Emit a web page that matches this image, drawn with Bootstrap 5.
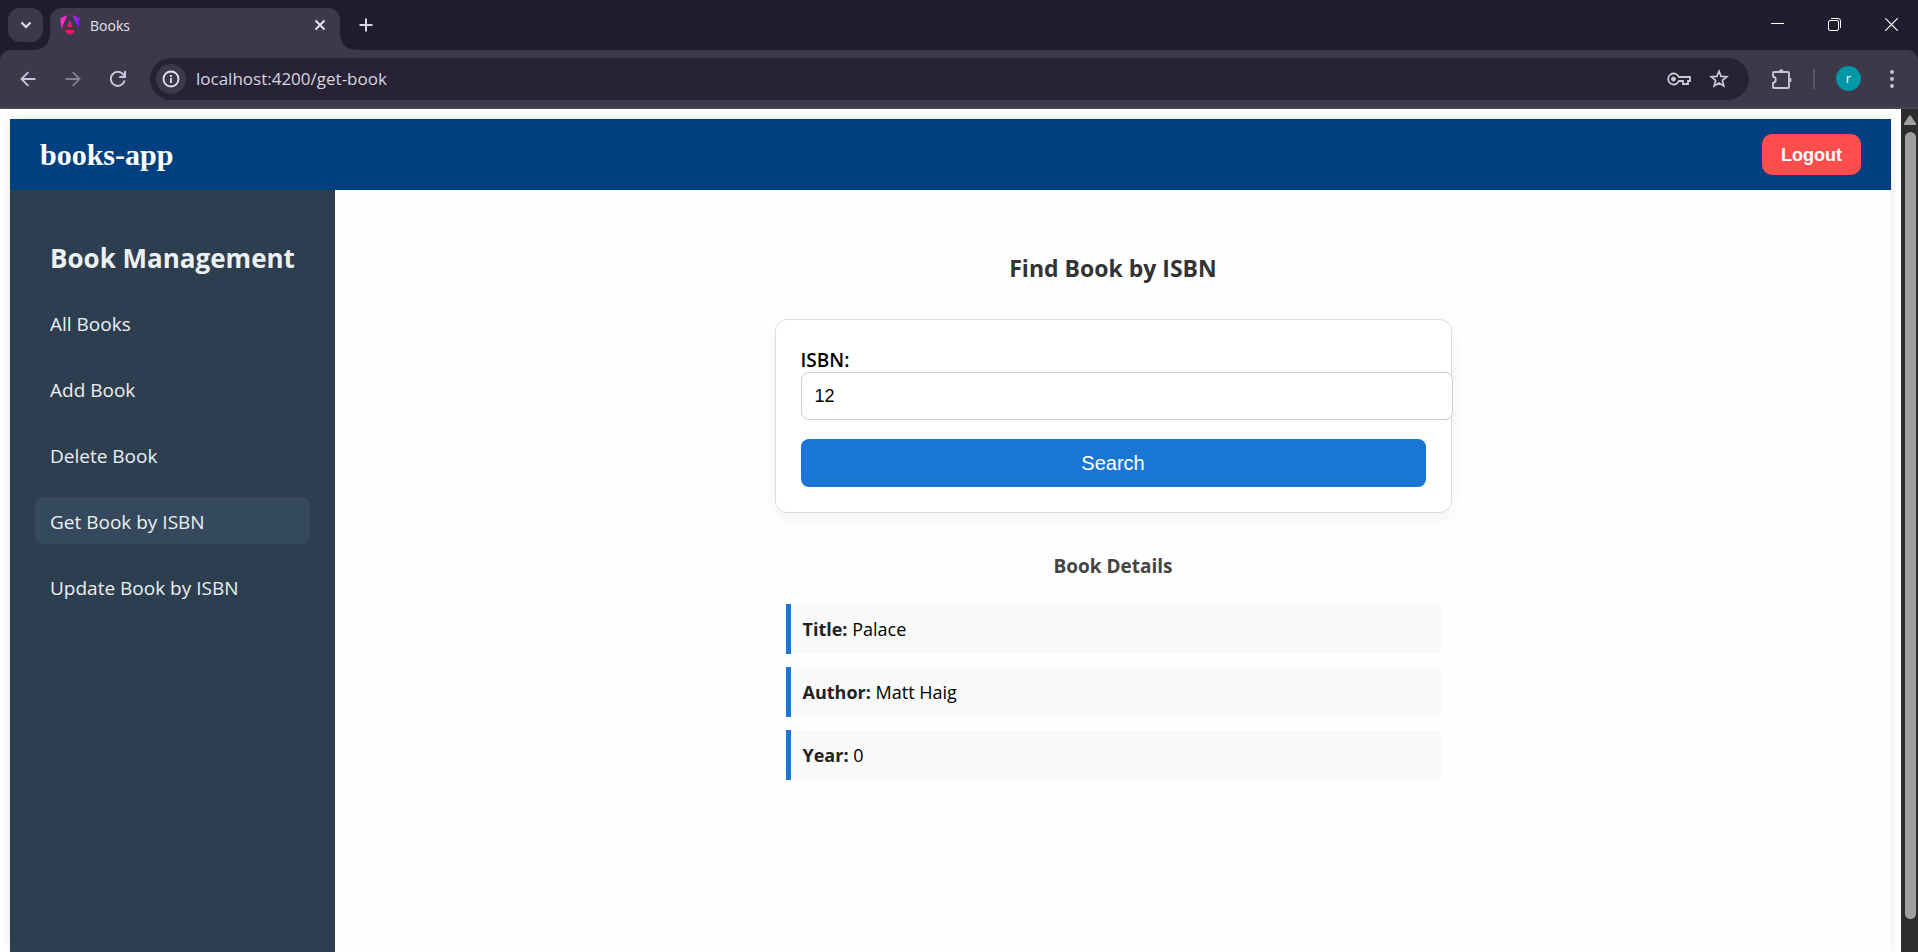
<!DOCTYPE html>
<html lang="en">
<head>
<meta charset="utf-8">
<meta name="viewport" content="width=device-width, initial-scale=1">
<title>Books</title>
<link href="https://cdn.jsdelivr.net/npm/bootstrap@5.3.0/dist/css/bootstrap.min.css" rel="stylesheet">
<style>
:root { --strip: #211d2f; --bar: #3d394b; --omni: #272335; --icon: #c9c4dc; }
body { font-family: "Open Sans", "Noto Sans", sans-serif; background: #fff; color: #000; }
button { border: 0; background: none; padding: 0; color: inherit; }
svg { display: block; flex: none; }

/* browser frame */
.tab-strip { background: var(--strip); height: 50px; padding-left: 8px; }
.tab-menu { width: 35px; height: 34px; margin-top: 8px; border-radius: 12px; background: var(--bar); color: #e6e2f2; }
.browser-tab { position: relative; width: 290px; height: 42px; margin: 8px 0 0 7px; padding: 0 10px 8px; border-radius: 12px 12px 0 0; background: var(--bar); color: #e6e3ee; font-size: 14px; }
.browser-tab::before, .browser-tab::after { content: ""; position: absolute; bottom: 0; width: 14px; height: 14px; }
.browser-tab::before { right: 100%; background: radial-gradient(circle at 0 0, transparent 13px, var(--bar) 14px); }
.browser-tab::after { left: 100%; background: radial-gradient(circle at 100% 0, transparent 13px, var(--bar) 14px); }
.tab-title { margin-left: 10px; }
.new-tab { width: 52px; height: 50px; color: #d9d4e8; }
.win-controls { margin-right: -2px; }
.win-btn { width: 57px; height: 48px; color: #fff; }
.frame-bg { background: var(--strip); }
.tool-bar { height: 59px; background: var(--bar); border-bottom: 2px solid #4a4654; border-radius: 10px 10px 0 0; color: var(--icon); padding: 0 4px 0 5px; }
.tool-btn { width: 45px; height: 40px; }
.omnibox { height: 42px; border-radius: 21px; background: var(--omni); margin-left: 10px; padding: 0 10px 0 6px; }
.site-info { width: 30px; height: 30px; border-radius: 50%; background: var(--bar); color: #e6e2f2; }
.url-field { border: 0; outline: 0; background: none; color: #d8d5e0; font-size: 17px; padding: 0; margin-left: 10px; }
.omni-btn { width: 40px; height: 40px; color: #cbc8d2; }
.tool-rule { width: 2px; height: 20px; background: #5a5568; margin-left: 11px; }
.avatar-dot { width: 25px; height: 25px; border-radius: 50%; background: #0097a7; color: #fff; font-size: 13px; line-height: 23px; margin-left: 21px; }

/* scrollbar */
.scroll-track { width: 17px; background: #2c2c2c; padding: 6px 0 0 1px; }
.scroll-thumb { width: 11px; height: 94%; margin-top: 7px; border-radius: 6px; background: #9f9f9f; }

/* page */
.page-area { padding: 10px 10px 0; }
.app-box { box-shadow: 0 0 10px rgba(0,0,0,.1); }
.app-header { height: 71px; background: #004080; padding: 0 30px; }
.brand-name { font-family: "Liberation Serif", serif; font-weight: 700; font-size: 30px; line-height: 34px; color: #fff; }
.btn-logout { height: 41px; padding: 0 19px; border-radius: 10px; background: #ff4d4d; color: #fff; font: 700 18px/38px "Liberation Sans", sans-serif; }
.side-menu { width: 325px; background: #2c3e50; padding: 48px 25px 0; color: #ecf0f1; }
.side-menu h2 { font-size: 26px; line-height: 40px; font-weight: 700; padding-left: 15px; margin: 0 0 21px; white-space: nowrap; }
.side-menu nav { gap: 19px; }
.side-menu a { color: #ecf0f1; font-size: 19px; line-height: 27px; padding: 12px 15px 8px; border-radius: 8px; text-decoration: none; white-space: nowrap; }
.side-menu a.active { background: #34495e; }
.main-pane { background: #fefefe; padding-top: 60px; }
.main-pane h2 { font-size: 23px; line-height: 36px; font-weight: 700; color: #333; margin: 0 0 33px; }
.search-card { width: 100%; max-width: 677px; padding: 25px; border: 1px solid #ddd; border-radius: 12px; background: #fff; box-shadow: 0 5px 15px rgba(0,0,0,.05); }
.search-card label { font-size: 19px; line-height: 23px; padding-top: 4px; font-weight: 600; }
.isbn-input { width: calc(100% + 27px); height: 48px; padding: 0 13px; border: 1px solid #ccc; border-radius: 8px; background: #fff; color: #000; font: 18px "Liberation Sans", sans-serif; }
.btn-search { height: 48px; margin-top: 19px; border-radius: 8px; background: #1976d2; color: #fff; font: 20px/46px "Liberation Sans", sans-serif; }
.main-pane h3 { font-size: 19px; line-height: 30px; font-weight: 700; color: #444; margin: 38px 0 23px; }
.detail-list { width: 100%; max-width: 655px; gap: 13px; }
.detail-list li { height: 50px; padding: 0 12px; line-height: 51px; font-size: 18px; border-left: 5px solid #1976d2; background: #f9f9f9; }
.detail-list strong { color: #222; }
</style>
</head>
<body>
<div class="d-flex flex-column vh-100 overflow-hidden">
  <header class="frame-bg">
    <div class="tab-strip d-flex align-items-start">
      <button class="tab-menu d-flex align-items-center justify-content-center" aria-label="Search tabs">
        <svg width="12" height="8" viewBox="0 0 12 8" fill="none" stroke="currentColor" stroke-width="2"><path d="M1.5 1.5 6 6l4.500-4.500"/></svg>
      </button>
      <div class="browser-tab d-flex align-items-center">
        <svg width="20" height="20" viewBox="0 0 20 20">
          <defs>
            <linearGradient id="ga" x1="0" y1="0" x2="0" y2="1"><stop offset="0" stop-color="#ff1fb8"/><stop offset="1" stop-color="#ff1060"/></linearGradient>
            <linearGradient id="gb" x1="0" y1="0" x2="1" y2="1"><stop offset="0" stop-color="#b02cf0"/><stop offset="1" stop-color="#6a10ff"/></linearGradient>
          </defs>
          <path d="M7.500 0 .3 3.200 1.300 14z" fill="#f92bc8"/>
          <path d="M12.500 0l7.200 3.200-1 10.800z" fill="url(#gb)"/>
          <path d="M10 5.500 12.600 12H7.400z" fill="url(#ga)"/>
          <path d="M6 15h8l.8 1.800L10 19.800l-4.800-3z" fill="#ff1060"/>
        </svg>
        <span class="tab-title flex-grow-1">Books</span>
        <button aria-label="Close tab" class="me-1"><svg width="12" height="12" viewBox="0 0 12 12" stroke="currentColor" stroke-width="2"><path d="M1.500 1.500l9 9M10.500 1.500l-9 9"/></svg></button>
      </div>
      <button class="new-tab d-flex align-items-center justify-content-center" aria-label="New tab"><svg width="14" height="14" viewBox="0 0 14 14" stroke="currentColor" stroke-width="2"><path d="M7 .5v13M.5 7h13"/></svg></button>
      <div class="win-controls d-flex ms-auto">
        <button class="win-btn d-flex align-items-center justify-content-center" aria-label="Minimize"><svg width="13" height="13" viewBox="0 0 13 13" stroke="currentColor"><path d="M0 5.500h13"/></svg></button>
        <button class="win-btn d-flex align-items-center justify-content-center" aria-label="Restore"><svg width="13" height="13" viewBox="0 0 13 13" fill="none" stroke="currentColor"><rect x=".5" y="2.500" width="10" height="10" rx="1.500"/><path d="M3 .5h7a2.500 2.500 0 0 1 2.500 2.500v7"/></svg></button>
        <button class="win-btn d-flex align-items-center justify-content-center" aria-label="Close"><svg width="13" height="13" viewBox="0 0 13 13" stroke="currentColor" stroke-width="1.200"><path d="M.3.3l12.400 12.400M12.700.3.3 12.700"/></svg></button>
      </div>
    </div>
    <div class="tool-bar d-flex align-items-center">
      <button class="tool-btn d-flex align-items-center justify-content-center" aria-label="Back"><svg width="16" height="16" viewBox="0 0 16 16" fill="none" stroke="currentColor" stroke-width="1.900"><path d="M15.500 8H2M8.300 1.200 1.500 8l6.800 6.800"/></svg></button>
      <button class="tool-btn d-flex align-items-center justify-content-center opacity-50" aria-label="Forward"><svg width="16" height="16" viewBox="0 0 16 16" fill="none" stroke="currentColor" stroke-width="1.900"><path d="M.5 8H14M7.700 1.200 14.500 8l-6.800 6.800"/></svg></button>
      <button class="tool-btn d-flex align-items-center justify-content-center" aria-label="Reload"><svg width="16" height="16" viewBox="0 0 16 16" fill="none" stroke="currentColor" stroke-width="2"><path d="M14.600 9.500A7 7 0 1 1 13.200 3.400L15 5.400M15 0v6H9.200"/></svg></button>
      <div class="omnibox d-flex align-items-center flex-grow-1">
        <button class="site-info d-flex align-items-center justify-content-center" aria-label="Site information"><svg width="18" height="18" viewBox="0 0 18 18" fill="none" stroke="currentColor" stroke-width="1.800"><circle cx="9" cy="9" r="7.500"/><path d="M9 8v5M9 5v2"/></svg></button>
        <input class="url-field flex-grow-1" type="text" value="localhost:4200/get-book" aria-label="Address">
        <button class="omni-btn d-flex align-items-center justify-content-center" aria-label="Passwords"><svg width="24" height="14" viewBox="0 0 24 14" fill="none" stroke="currentColor" stroke-width="1.800"><path d="M11.800 5A5.500 5.500 0 1 0 11.800 9H16v3h5V9h2V5z"/><circle cx="6.500" cy="7" r="2" fill="currentColor" stroke-width="1"/></svg></button>
        <button class="omni-btn d-flex align-items-center justify-content-center" aria-label="Bookmark"><svg width="20" height="20" viewBox="0 0 20 20" fill="none" stroke="currentColor" stroke-width="1.700"><path d="M10 2.200l2.100 5.200 5.700.4-4.400 3.600 1.400 5.600L10 14l-4.800 3 1.400-5.600L2.200 7.800l5.700-.4z"/></svg></button>
      </div>
      <button class="tool-btn d-flex align-items-center justify-content-center ms-2 ps-1" aria-label="Extensions"><svg width="22" height="22" viewBox="0 0 22 22" fill="none" stroke="currentColor" stroke-width="1.900"><path d="M3 4h14q1 0 1 1v14q0 1-1 1H3q-1 0-1-1v-4a3.300 3.300 0 0 0 0-6.500V5q0-1 1-1z"/><path d="M8 3.500a2.200 2.200 0 0 1 4.400 0zM18.500 9.800a2.200 2.200 0 0 1 0 4.400z" fill="currentColor" stroke="none"/></svg></button>
      <span class="tool-rule"></span>
      <button class="avatar-dot" aria-label="Profile">r</button>
      <button class="tool-btn d-flex align-items-center justify-content-center ms-2" aria-label="Menu"><svg width="4" height="18" viewBox="0 0 4 18" fill="currentColor"><circle cx="2" cy="2" r="1.900"/><circle cx="2" cy="9" r="1.900"/><circle cx="2" cy="16" r="1.900"/></svg></button>
    </div>
  </header>

  <div class="d-flex flex-grow-1 overflow-hidden">
    <div class="page-area d-flex flex-grow-1">
      <div class="app-box d-flex flex-column flex-grow-1">
        <header class="app-header d-flex align-items-center justify-content-between">
          <span class="brand-name">books-app</span>
          <button class="btn-logout">Logout</button>
        </header>
        <div class="d-flex flex-grow-1">
          <aside class="side-menu flex-shrink-0">
            <h2>Book Management</h2>
            <nav class="d-flex flex-column">
              <a href="#all">All Books</a>
              <a href="#add">Add Book</a>
              <a href="#delete">Delete Book</a>
              <a href="#get" class="active">Get Book by ISBN</a>
              <a href="#update">Update Book by ISBN</a>
            </nav>
          </aside>
          <main class="main-pane d-flex flex-column align-items-center flex-grow-1">
            <h2>Find Book by ISBN</h2>
            <form class="search-card d-flex flex-column" onsubmit="return false">
              <label for="isbn">ISBN:</label>
              <input class="isbn-input" id="isbn" type="text" value="12">
              <button class="btn-search" type="submit">Search</button>
            </form>
            <h3>Book Details</h3>
            <ul class="detail-list list-unstyled d-flex flex-column mb-0">
              <li><strong>Title:</strong> Palace</li>
              <li><strong>Author:</strong> Matt Haig</li>
              <li><strong>Year:</strong> 0</li>
            </ul>
          </main>
        </div>
      </div>
    </div>
    <div class="scroll-track d-flex flex-column align-items-center" aria-hidden="true">
      <svg width="12" height="10" viewBox="0 0 12 10" fill="#9f9f9f"><path d="M5 1q1-1.500 2 0l5 7.500q.3 1.500-1 1.500H1q-1.300 0-1-1.500z"/></svg>
      <div class="scroll-thumb"></div>
    </div>
  </div>
</div>
<script src="https://cdn.jsdelivr.net/npm/bootstrap@5.3.0/dist/js/bootstrap.bundle.min.js"></script>
</body>
</html>
